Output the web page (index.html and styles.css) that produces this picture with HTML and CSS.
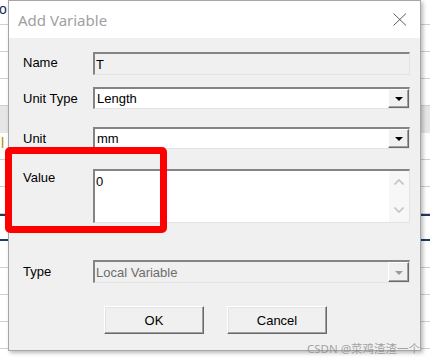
FILE: index.html
```html
<!DOCTYPE html>
<html lang="en">
<head>
    <meta charset="UTF-8">
    <meta name="viewport" content="width=device-width, initial-scale=1.0">
    <title>Add Variable</title>
    <link rel="stylesheet" href="styles.css">
</head>
<body>
    <span class="peek peek-top">o</span>
    <span class="peek peek-mid">l</span>

    <div class="dialog">
        <div class="titlebar">
            <span class="title">Add Variable</span>
            <svg class="close" width="14" height="13" viewBox="0 0 14 13">
                <path d="M0.5 0.5 L13 12.5 M13 0.5 L0.5 12.5" stroke="#5a5a5a" stroke-width="1" fill="none"/>
            </svg>
        </div>

        <div class="content">
            <div class="row row-name">
                <label>Name</label>
                <div class="field readonly"><span>T</span></div>
            </div>

            <div class="row row-unittype">
                <label>Unit Type</label>
                <div class="field combo">
                    <span class="combo-text">Length</span>
                    <span class="combo-btn"><i class="tri"></i></span>
                </div>
            </div>

            <div class="row row-unit">
                <label>Unit</label>
                <div class="field combo">
                    <span class="combo-text">mm</span>
                    <span class="combo-btn"><i class="tri"></i></span>
                </div>
            </div>

            <div class="row row-value">
                <label>Value</label>
                <div class="field memo">
                    <span class="memo-text">0</span>
                    <span class="scrollbar">
                        <svg width="10" height="6" viewBox="0 0 10 6"><path d="M0.5 5.5 L5 1 L9.5 5.5" stroke="#c4c4c4" stroke-width="1.6" fill="none"/></svg>
                        <svg width="10" height="6" viewBox="0 0 10 6"><path d="M0.5 0.5 L5 5 L9.5 0.5" stroke="#c4c4c4" stroke-width="1.6" fill="none"/></svg>
                    </span>
                </div>
            </div>

            <div class="row row-type">
                <label>Type</label>
                <div class="field combo disabled">
                    <span class="combo-text">Local Variable</span>
                    <span class="combo-btn"><i class="tri"></i></span>
                </div>
            </div>

            <div class="buttons">
                <button>OK</button>
                <button>Cancel</button>
            </div>
        </div>
    </div>

    <div class="highlight"></div>
    <div class="watermark">CSDN @菜鸡渣渣一个</div>
</body>
</html>
```

FILE: styles.css
```css
body {
    margin: 0;
    width: 430px;
    height: 361px;
    overflow: hidden;
    position: relative;
    font-family: "Liberation Sans", Arial, sans-serif;
    font-size: 13px;
    color: #000;
    background:
        linear-gradient(#1d3b66, #1d3b66) 0 214px / 100% 2px no-repeat,
        linear-gradient(#1d3b66, #1d3b66) 0 239px / 100% 2px no-repeat,
        linear-gradient(#e6e6e6, #e6e6e6) 0 106px / 100% 27px no-repeat,
        repeating-linear-gradient(to bottom, transparent 0 24px, #cfcfcf 24px 25px, transparent 25px 27px),
        #fff;
}
.peek {
    position: absolute;
    font-size: 14px;
}
.peek-top {
    top: 1px;
    left: -1px;
    color: #1a2a55;
}
.peek-mid {
    top: 135px;
    left: 1px;
    color: #b8860b;
}
.dialog {
    position: relative;
    margin-left: 8px;
    width: 413px;
    height: 351px;
    box-sizing: border-box;
    border: 1px solid #a6a6a6;
    background: #f0f0f0;
    box-shadow: 2px 2px 4px rgba(0, 0, 0, 0.28);
    display: flex;
    flex-direction: column;
}
.titlebar {
    height: 37px;
    background: #fff;
    display: flex;
    align-items: center;
    justify-content: space-between;
    padding: 0 13px 0 9px;
}
.title {
    font-family: "Noto Sans", "Open Sans", sans-serif;
    font-size: 15px;
    color: #a0a0a0;
}
.close {
    display: block;
}
.content {
    padding: 14px 10px 0 14px;
    display: flex;
    flex-direction: column;
}
.row {
    display: flex;
    align-items: center;
}
.row label {
    width: 70px;
    flex: none;
}
.row-name label { margin-top: -2px; }
.row-unittype { margin-top: 12px; }
.row-unit { margin-top: 18px; }
.row-value { margin-top: 20px; align-items: flex-start; }
.row-value label { padding-top: 1px; }
.row-type { margin-top: 37px; }

.field {
    flex: 1;
    box-sizing: border-box;
    height: 22px;
    border-top: 2px solid #848484;
    border-left: 2px solid #848484;
    border-right: 1px solid #e3e3e3;
    border-bottom: 1px solid #e3e3e3;
    background: #fff;
    display: flex;
    align-items: center;
}
.readonly {
    height: 23px;
    background: #f0f0f0;
    padding-left: 1px;
}
.combo-text {
    flex: 1;
    padding-left: 2px;
}
.combo-btn {
    align-self: stretch;
    width: 21px;
    box-sizing: border-box;
    background: #f0f0f0;
    border-top: 1px solid #fff;
    border-left: 1px solid #fff;
    border-right: 1px solid #6a6a6a;
    border-bottom: 1px solid #6a6a6a;
    box-shadow: inset -1px -1px 0 #a0a0a0;
    display: flex;
    justify-content: center;
    align-items: center;
}
.tri {
    width: 0;
    height: 0;
    border-left: 4px solid transparent;
    border-right: 4px solid transparent;
    border-top: 4px solid #000;
    margin-top: 1px;
}
.disabled {
    height: 23px;
    background: #f0f0f0;
}
.disabled .combo-text {
    color: #6d6d6d;
    padding-left: 1px;
}
.disabled .tri {
    border-top-color: #9a9a9a;
}
.memo {
    height: 54px;
    align-items: stretch;
}
.memo-text {
    flex: 1;
    padding: 3px 0 0 1px;
}
.scrollbar {
    width: 20px;
    background: #f7f7f7;
    display: flex;
    flex-direction: column;
    justify-content: space-between;
    align-items: center;
    padding: 8px 0 9px;
}
.scrollbar svg {
    display: block;
}
.buttons {
    margin-top: 23px;
    display: flex;
    justify-content: center;
    gap: 23px;
    padding-right: 2px;
}
button {
    width: 100px;
    height: 28px;
    font-family: "Liberation Sans", Arial, sans-serif;
    font-size: 13px;
    color: #000;
    background: #f0f0f0;
    border-top: 1px solid #fff;
    border-left: 1px solid #fff;
    border-right: 1px solid #696969;
    border-bottom: 1px solid #696969;
    box-shadow: inset -1px -1px 0 #a0a0a0, inset 1px 1px 0 #e3e3e3;
    padding: 0;
}
.highlight {
    position: absolute;
    left: 5px;
    top: 147px;
    width: 162px;
    height: 86px;
    box-sizing: border-box;
    border: 7px solid #ff0000;
    border-radius: 5px;
}
.watermark {
    position: absolute;
    left: 307px;
    top: 340px;
    font-family: "Noto Sans", "Noto Sans CJK SC", sans-serif;
    font-size: 11.5px;
    color: rgba(140, 140, 140, 0.8);
    white-space: nowrap;
}
```
